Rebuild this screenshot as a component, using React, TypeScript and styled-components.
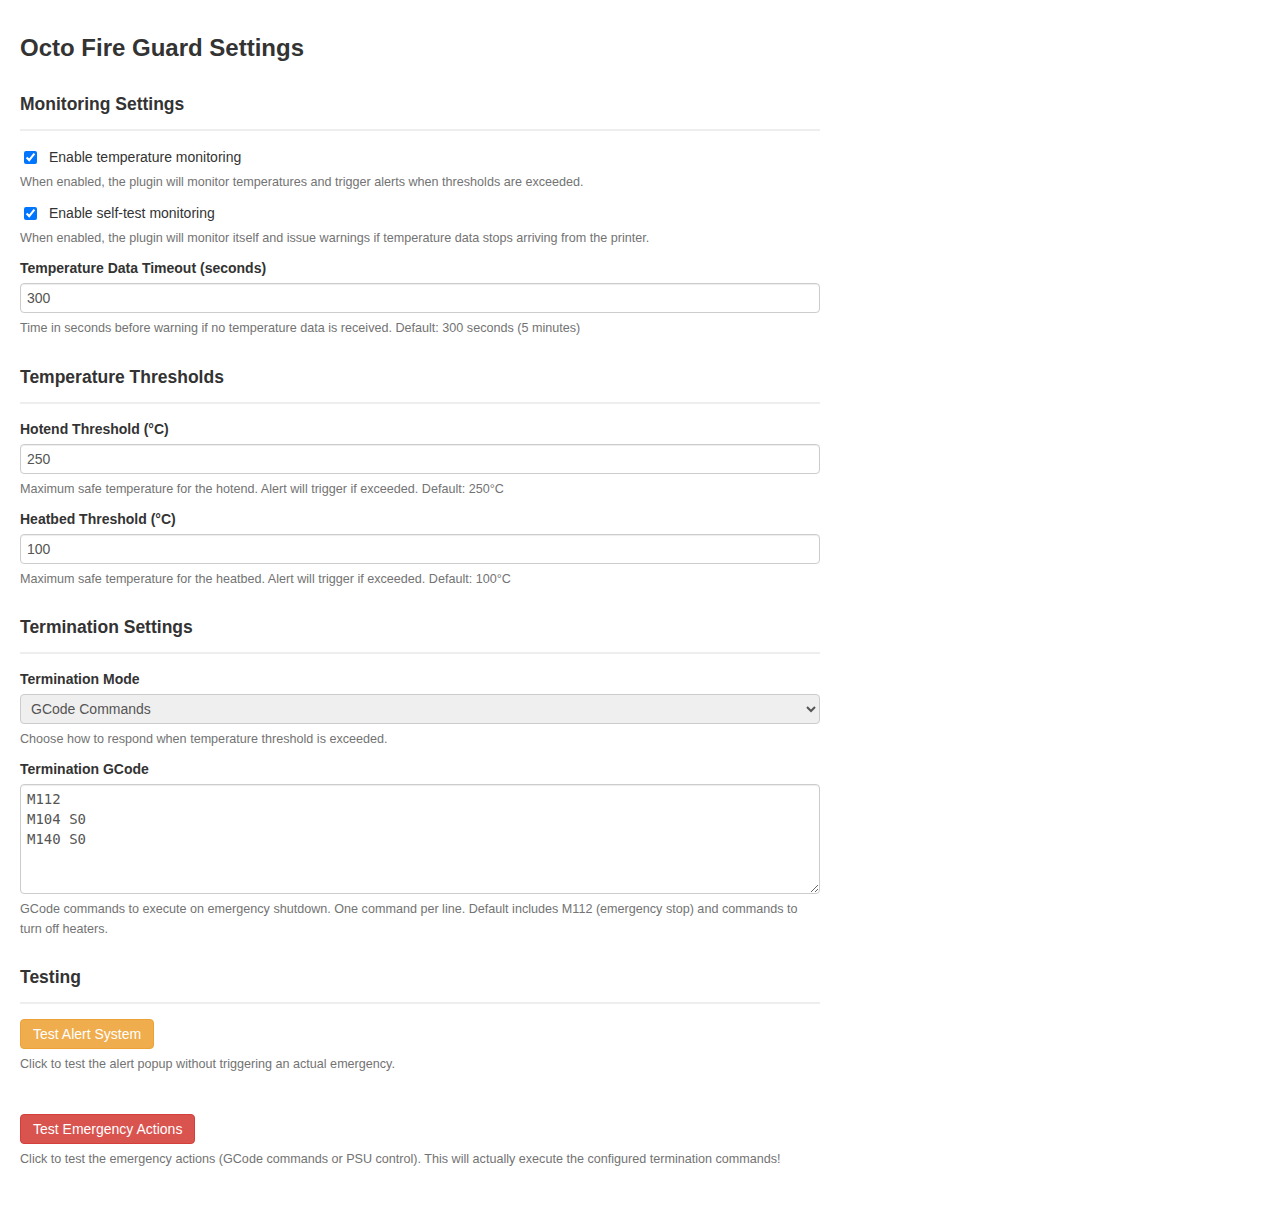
import React from "react";
import styled, { createGlobalStyle } from "styled-components";

const GlobalStyle = createGlobalStyle`
  html, body {
    margin: 0;
    padding: 0;
    background: #ffffff;
  }
  body {
    font-family: "Liberation Sans", Arial, Helvetica, sans-serif;
    font-size: 14px;
    line-height: 20px;
    color: #333333;
  }
  * { box-sizing: border-box; }
`;

const Page = styled.div`
  display: flex;
  flex-direction: column;
  padding: 20px;
  width: 840px;
`;

const Title = styled.h2`
  margin: 15px 0 0;
  font-size: 24px;
  line-height: 26px;
  font-weight: 700;
  color: #333333;
`;

const Section = styled.section<{ $top: number }>`
  display: flex;
  flex-direction: column;
  margin-top: ${(p) => p.$top}px;
`;

const SectionTitle = styled.h3`
  margin: 0;
  font-size: 17.5px;
  line-height: 20px;
  font-weight: 700;
  color: #333333;
`;

const Divider = styled.hr`
  margin: 15px 0 0;
  border: 0;
  border-top: 2px solid #eeeeee;
  height: 0;
  width: 100%;
`;

const Field = styled.div<{ $top: number }>`
  display: flex;
  flex-direction: column;
  align-items: flex-start;
  margin-top: ${(p) => p.$top}px;
`;

const CheckRow = styled.label`
  display: flex;
  align-items: center;
  height: 20px;
  font-size: 14px;
  color: #333333;
  cursor: pointer;
`;

const Check = styled.input`
  width: 13px;
  height: 13px;
  margin: 0 12px 0 4px;
  accent-color: #0075ff;
`;

const FieldLabel = styled.label`
  display: block;
  margin-bottom: 5px;
  font-size: 14px;
  line-height: 20px;
  font-weight: 700;
  color: #333333;
`;

const TextInput = styled.input`
  display: block;
  width: 800px;
  height: 30px;
  padding: 4px 6px;
  border: 1px solid #cccccc;
  border-radius: 4px;
  box-shadow: inset 0 1px 1px rgba(0, 0, 0, 0.075);
  font-family: "Liberation Sans", Arial, sans-serif;
  font-size: 14px;
  line-height: 20px;
  color: #555555;
  background: #ffffff;
`;

const Select = styled.select`
  display: block;
  width: 800px;
  height: 30px;
  padding: 0 6px;
  border: 1px solid #cccccc;
  border-radius: 4px;
  background-color: #efefef;
  font-family: "Liberation Sans", Arial, sans-serif;
  font-size: 14px;
  color: #555555;
`;

const CodeArea = styled.textarea`
  display: block;
  width: 800px;
  height: 110px;
  padding: 4px 6px;
  border: 1px solid #cccccc;
  border-radius: 4px;
  box-shadow: inset 0 1px 1px rgba(0, 0, 0, 0.075);
  font-family: "DejaVu Sans Mono", "Liberation Mono", monospace;
  font-size: 14px;
  line-height: 20px;
  color: #555555;
  background: #ffffff;
  resize: vertical;
`;

const Help = styled.p`
  margin: 5px 0 0;
  max-width: 800px;
  font-size: 12.6px;
  line-height: 20px;
  color: #737373;
`;

const Button = styled.button<{ $variant: "warning" | "danger" }>`
  display: block;
  height: 30px;
  padding: 4px 12px;
  border-radius: 4px;
  border: 1px solid
    ${(p) => (p.$variant === "warning" ? "#eea236" : "#d43f3a")};
  background: ${(p) => (p.$variant === "warning" ? "#f0ad4e" : "#d9534f")};
  color: #ffffff;
  font-family: "Liberation Sans", Arial, sans-serif;
  font-size: 14px;
  line-height: 20px;
  cursor: pointer;
`;

export default function App() {
  return (
    <>
      <GlobalStyle />
      <Page>
        <Title>Octo Fire Guard Settings</Title>

        <Section $top={33}>
          <SectionTitle>Monitoring Settings</SectionTitle>
          <Divider />
          <Field $top={16}>
            <CheckRow>
              <Check type="checkbox" defaultChecked />
              Enable temperature monitoring
            </CheckRow>
            <Help>
              When enabled, the plugin will monitor temperatures and trigger
              alerts when thresholds are exceeded.
            </Help>
          </Field>
          <Field $top={11}>
            <CheckRow>
              <Check type="checkbox" defaultChecked />
              Enable self-test monitoring
            </CheckRow>
            <Help>
              When enabled, the plugin will monitor itself and issue warnings
              if temperature data stops arriving from the printer.
            </Help>
          </Field>
          <Field $top={10}>
            <FieldLabel>Temperature Data Timeout (seconds)</FieldLabel>
            <TextInput type="number" defaultValue="300" />
            <Help>
              Time in seconds before warning if no temperature data is
              received. Default: 300 seconds (5 minutes)
            </Help>
          </Field>
        </Section>

        <Section $top={29}>
          <SectionTitle>Temperature Thresholds</SectionTitle>
          <Divider />
          <Field $top={15}>
            <FieldLabel>Hotend Threshold (°C)</FieldLabel>
            <TextInput type="number" defaultValue="250" />
            <Help>
              Maximum safe temperature for the hotend. Alert will trigger if
              exceeded. Default: 250°C
            </Help>
          </Field>
          <Field $top={10}>
            <FieldLabel>Heatbed Threshold (°C)</FieldLabel>
            <TextInput type="number" defaultValue="100" />
            <Help>
              Maximum safe temperature for the heatbed. Alert will trigger if
              exceeded. Default: 100°C
            </Help>
          </Field>
        </Section>

        <Section $top={28}>
          <SectionTitle>Termination Settings</SectionTitle>
          <Divider />
          <Field $top={15}>
            <FieldLabel>Termination Mode</FieldLabel>
            <Select defaultValue="gcode">
              <option value="gcode">GCode Commands</option>
              <option value="psu">PSU Control</option>
            </Select>
            <Help>
              Choose how to respond when temperature threshold is exceeded.
            </Help>
          </Field>
          <Field $top={10}>
            <FieldLabel>Termination GCode</FieldLabel>
            <CodeArea defaultValue={"M112\nM104 S0\nM140 S0"} />
            <Help>
              GCode commands to execute on emergency shutdown. One command per
              line. Default includes M112 (emergency stop) and commands to
              turn off heaters.
            </Help>
          </Field>
        </Section>

        <Section $top={28}>
          <SectionTitle>Testing</SectionTitle>
          <Divider />
          <Field $top={15}>
            <Button $variant="warning">Test Alert System</Button>
            <Help>
              Click to test the alert popup without triggering an actual
              emergency.
            </Help>
          </Field>
          <Field $top={40}>
            <Button $variant="danger">Test Emergency Actions</Button>
            <Help>
              Click to test the emergency actions (GCode commands or PSU
              control). This will actually execute the configured termination
              commands!
            </Help>
          </Field>
        </Section>
      </Page>
    </>
  );
}
